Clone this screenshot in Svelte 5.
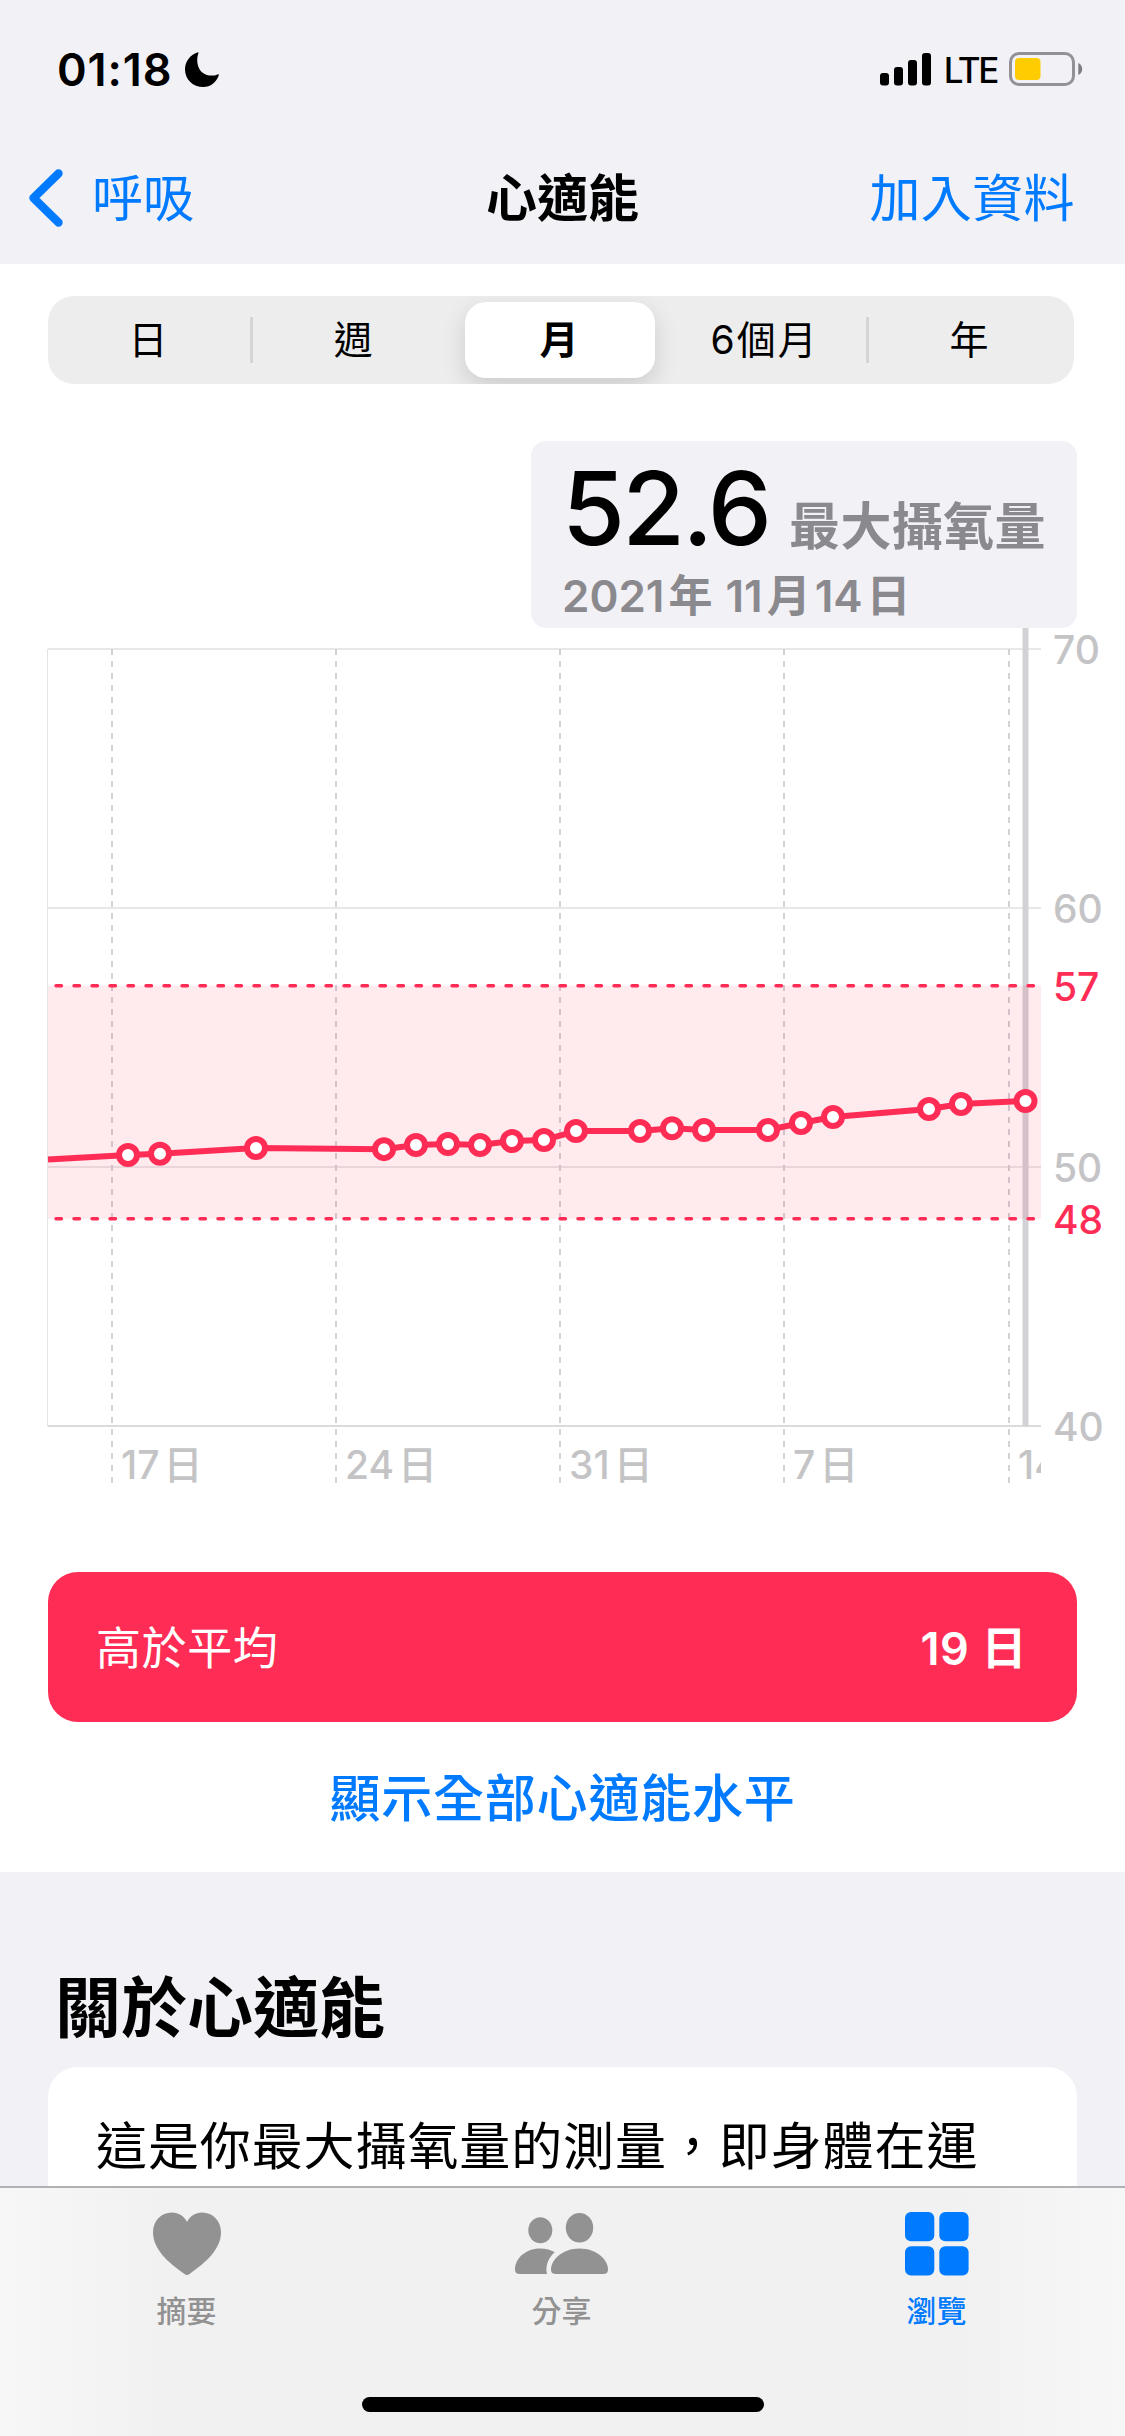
<script>
    const ranges = ['日', '週', '月', '6個月', '年'];
    const selected = 2;

    // chart scale, svg starts right under the callout
    const left = 48;
    const right = 1041;
    const top = 21;
    const unit = 25.9;
    const y = (value) => top + (70 - value) * unit;

    const gridValues = [70, 60, 50];
    const limits = [57, 48];
    const weeks = [
        { x: 112, day: 17 },
        { x: 336, day: 24 },
        { x: 560, day: 31 },
        { x: 784, day: 7 },
        { x: 1009, day: 14 }
    ];
    const readings = [
        { x: 128, value: 50.46 },
        { x: 160, value: 50.51 },
        { x: 256, value: 50.73 },
        { x: 384, value: 50.69 },
        { x: 416, value: 50.85 },
        { x: 448, value: 50.89 },
        { x: 480, value: 50.85 },
        { x: 512, value: 51.0 },
        { x: 544, value: 51.04 },
        { x: 576, value: 51.39 },
        { x: 640, value: 51.39 },
        { x: 672, value: 51.5 },
        { x: 704, value: 51.43 },
        { x: 768, value: 51.43 },
        { x: 801, value: 51.7 },
        { x: 833, value: 51.93 },
        { x: 929, value: 52.24 },
        { x: 961, value: 52.43 },
        { x: 1025.5, value: 52.55 }
    ];
    const line = [{ x: left, value: 50.29 }, ...readings]
        .map((r) => `${r.x},${y(r.value)}`)
        .join(' ');
</script>

<div class="screen">
    <header>
        <div class="status">
            <span class="time">01:18</span>
            <svg class="moon" width="34" height="35" viewBox="0 0 34 35">
                <path d="M12.6 .4 C13.2 .1 13.7 .6 13.4 1.3 C10.2 10.5 13.5 23.5 26.5 23.6 C28.8 23.6 30.7 23.2 32.5 22.4 C33.4 22.1 34 22.5 33.8 23.2 C31.5 30.3 25.5 35 18.3 35 C8 35 0 27.3 0 17.4 C0 9.5 5 2.8 12.6 .4 Z" />
            </svg>
            <svg class="signal" width="52" height="34" viewBox="0 0 52 34">
                <rect x="0" y="21" width="9" height="12.5" rx="3" />
                <rect x="14" y="15" width="9" height="18.5" rx="3" />
                <rect x="28" y="8" width="9" height="25.5" rx="3" />
                <rect x="42" y="1" width="9" height="32.5" rx="3" />
            </svg>
            <span class="network">LTE</span>
            <svg class="battery" width="75" height="34" viewBox="0 0 75 34">
                <rect x="1.5" y="1.5" width="63" height="31" rx="8.5" fill="none" stroke="#929196" stroke-width="3" />
                <rect x="6" y="6" width="25.5" height="22" rx="4" fill="#ffcc02" />
                <path d="M69.3 11 C74.5 13 74.5 21 69.3 23 Z" fill="#7d7c81" />
            </svg>
        </div>
        <nav>
            <a class="back" href="#back">
                <svg width="34" height="58" viewBox="0 0 34 58">
                    <path d="M29.5 4.5 L4.5 29 L29.5 53.5" fill="none" stroke="#007aff" stroke-width="8.4" stroke-linecap="round" stroke-linejoin="round" />
                </svg>
                <span>呼吸</span>
            </a>
            <h1>心適能</h1>
            <a class="add" href="#add">加入資料</a>
        </nav>
    </header>

    <main>
        <div class="segments">
            {#each ranges as range, i}
                <div class="segment" class:selected={i === selected} class:divided={i === 0 || i === 3}>
                    <span>{range}</span>
                </div>
            {/each}
        </div>

        <div class="callout">
            <div class="reading"><span class="value">52.6</span><span class="unit">最大攝氧量</span></div>
            <div class="date">2021<span class="year">年</span>11<span>月</span>14<span>日</span></div>
        </div>

        <svg class="chart" width="1125" height="870" viewBox="0 0 1125 870">
            <clipPath id="plot">
                <rect x={left - 1} y="0" width={right - left + 1} height="870" />
            </clipPath>
            <g clip-path="url(#plot)">
                <line x1="47.5" x2="47.5" y1={top} y2={y(40)} stroke="#e3e3e5" stroke-width="1" />
                {#each gridValues as value}
                    <line x1={left} x2={right} y1={y(value)} y2={y(value)} stroke="#e8e8e9" stroke-width="2" />
                {/each}
                <line x1={left} x2={right} y1={y(40)} y2={y(40)} stroke="#dadadb" stroke-width="2" />
                {#each weeks as week}
                    <line x1={week.x} x2={week.x} y1={top} y2="855" stroke="#d1d1d6" stroke-width="2" stroke-dasharray="6 6" />
                    <text class="tick" x={week.x + 9} y="851">{week.day}<tspan dx="4">日</tspan></text>
                {/each}
                <line x1="1025.5" x2="1025.5" y1="0" y2={y(40)} stroke="#d1d1d6" stroke-width="6" />
                <rect x={left} y={y(57)} width={right - left} height={y(48) - y(57)} fill="#ff2d55" fill-opacity="0.1" />
                {#each limits as limit}
                    <line x1="56" x2={right - 4} y1={y(limit)} y2={y(limit)} stroke="#ff2d55" stroke-width="3.4" stroke-linecap="round" stroke-dasharray="5.5 12.5" />
                {/each}
                <polyline points={line} fill="none" stroke="#ff2d55" stroke-width="6" />
                {#each readings as r}
                    <circle cx={r.x} cy={y(r.value)} r="9" fill="#fff" stroke="#ff2d55" stroke-width="6" />
                {/each}
            </g>
            {#each [...gridValues, 40] as value}
                <text class="tick" x="1053" y={y(value) + 15}>{value}</text>
            {/each}
            {#each limits as limit}
                <text class="tick limit" x="1053" y={y(limit) + 15}>{limit}</text>
            {/each}
        </svg>

        <div class="summary">
            <span>高於平均</span>
            <strong>19 日</strong>
        </div>
        <a class="show-all" href="#levels">顯示全部心適能水平</a>
    </main>

    <section>
        <h2>關於心適能</h2>
        <div class="card">這是你最大攝氧量的測量，即身體在運</div>
    </section>

    <footer>
        <div class="tabs">
            <div class="tab">
                <svg width="68" height="64" viewBox="0 0 68 64" fill="#929292">
                    <path d="M34 10 C31 4 25.5 .5 19 .5 C8 .5 0 9 0 20.5 C0 37 15 50.5 31.5 62 C33.3 63.3 34.7 63.3 36.5 62 C53 50.5 68 37 68 20.5 C68 9 60 .5 49 .5 C42.5 .5 37 4 34 10 Z" />
                </svg>
                <span>摘要</span>
            </div>
            <div class="tab">
                <svg width="94" height="64" viewBox="0 0 94 64" fill="#929292">
                    <ellipse cx="25.3" cy="18.3" rx="12" ry="13" />
                    <ellipse cx="64.5" cy="15.7" rx="13.7" ry="14.8" />
                    <path d="M0 57.5 C0 47 10 36.5 25.2 36.5 C31 36.5 36 38 39.8 40.3 C33.5 45.5 30 54 32 62 L5 62 C1.5 62 0 60.5 0 57.5 Z" />
                    <path d="M36 57.5 C36 48 47 36.5 64.5 36.5 C82 36.5 93 48 93 57.5 C93 60.5 91.5 62 88 62 L41 62 C37.5 62 36 60.5 36 57.5 Z" />
                </svg>
                <span>分享</span>
            </div>
            <div class="tab active">
                <svg width="64" height="64" viewBox="0 0 64 64" fill="#007aff">
                    <rect x="0" y="0" width="29.3" height="29.3" rx="6" />
                    <rect x="34.3" y="0" width="29.3" height="29.3" rx="6" />
                    <rect x="0" y="34.2" width="29.3" height="29.3" rx="6" />
                    <rect x="34.3" y="34.2" width="29.3" height="29.3" rx="6" />
                </svg>
                <span>瀏覽</span>
            </div>
        </div>
        <div class="home"></div>
    </footer>
</div>

<style>
    :global(body) {
        margin: 0;
    }
    .screen {
        display: flex;
        flex-direction: column;
        width: 1125px;
        height: 2436px;
        overflow: hidden;
        background: #f2f1f6;
        color: #000;
        font-family: Inter, 'Noto Sans CJK TC', sans-serif;
    }
    a {
        color: #007aff;
        text-decoration: none;
    }
    svg {
        display: block;
        flex: none;
    }
    header {
        height: 264px;
        flex: none;
    }
    .status {
        display: flex;
        align-items: center;
        height: 138px;
        padding: 0 41px 0 57px;
    }
    .time {
        width: 128px;
        font-size: 45px;
        font-weight: 600;
        letter-spacing: 0.9px;
    }
    .signal {
        margin-left: auto;
    }
    .network {
        margin: 2px 12px 0 12px;
        font-size: 35px;
        font-weight: 500;
        letter-spacing: -2.4px;
    }
    nav {
        display: grid;
        grid-template-columns: 1fr auto 1fr;
        align-items: center;
        height: 120px;
        padding: 0 50px 0 29px;
        font-size: 51px;
        line-height: 60px;
    }
    nav span,
    .add {
        padding-top: 2px;
    }
    .back {
        display: flex;
        align-items: center;
        gap: 29px;
    }
    h1 {
        margin: 0;
        padding: 2px 0 0 21px;
        font-size: 51px;
        font-weight: 700;
    }
    .add {
        justify-self: end;
        letter-spacing: 0.4px;
    }
    main {
        flex: none;
        display: flex;
        flex-direction: column;
        height: 1608px;
        background: #fff;
    }
    .segments {
        display: grid;
        grid-template: 88px / repeat(5, 1fr);
        height: 88px;
        margin: 32px 51px 0 48px;
        border-radius: 26px;
        background: #ededee;
        overflow: hidden;
    }
    .segment {
        display: flex;
        align-items: center;
        justify-content: center;
        margin: 21px 0;
        font-size: 39px;
        line-height: 46px;
        letter-spacing: 2px;
        border-right: 3px solid transparent;
    }
    .divided {
        border-color: #d5d5d6;
    }
    .selected {
        margin: 6px 9px 6px 7px;
        border: 0;
        border-radius: 21px;
        background: #fff;
        box-shadow: 0 9px 24px rgba(0, 0, 0, 0.14);
        font-weight: 600;
    }
    .callout {
        align-self: flex-end;
        box-sizing: border-box;
        width: 546px;
        height: 187px;
        margin: 57px 48px 0 0;
        padding: 15px 0 0 31px;
        border-radius: 15px;
        background: #f2f1f6;
        color: #8a898e;
        white-space: nowrap;
    }
    .reading {
        display: flex;
        align-items: baseline;
        height: 112px;
        line-height: 104px;
    }
    .value {
        width: 227px;
        color: #000;
        font-size: 102px;
        font-weight: 550;
        letter-spacing: -2.8px;
    }
    .unit {
        font-size: 51px;
        font-weight: 600;
        letter-spacing: 0.4px;
    }
    .date {
        font-size: 44px;
        font-weight: 600;
        line-height: 56px;
    }
    .date span {
        margin: 0 4px;
    }
    .date .year {
        margin-right: 13px;
    }
    .tick {
        fill: #c4c4c6;
        font-size: 39px;
        font-weight: 500;
    }
    .limit {
        fill: #ff2d55;
        font-weight: 550;
    }
    .summary {
        display: flex;
        align-items: center;
        justify-content: space-between;
        box-sizing: border-box;
        height: 150px;
        margin: 74px 48px 0;
        padding: 0 50px 4px 48px;
        border-radius: 30px;
        background: #ff2d55;
        color: #fff;
        font-size: 45px;
        letter-spacing: 0.6px;
    }
    strong {
        font-weight: 600;
    }
    .show-all {
        margin-top: 47px;
        text-align: center;
        font-size: 51px;
        font-weight: 500;
        letter-spacing: 0.8px;
        line-height: 60px;
    }
    section {
        flex: none;
        height: 314px;
        overflow: hidden;
    }
    h2 {
        margin: 96px 0 19px 55px;
        font-size: 66px;
        font-weight: 700;
        line-height: 80px;
    }
    .card {
        height: 160px;
        margin: 0 48px;
        padding: 50px 48px 0;
        border-radius: 30px;
        background: #fff;
        font-size: 51px;
        line-height: 60px;
        letter-spacing: 0.9px;
        white-space: nowrap;
    }
    footer {
        flex: 1;
        border-top: 2px solid #b1b1b5;
        background: linear-gradient(90deg, #f7f7f7, #f1f1f1 15%, #f1f1f1 85%, #f7f7f7);
    }
    .tabs {
        display: grid;
        grid-template-columns: repeat(3, 375px);
        height: 209px;
        margin-left: -1px;
    }
    .tab {
        display: flex;
        flex-direction: column;
        align-items: center;
        padding-top: 24px;
        color: #929292;
        font-size: 30px;
        font-weight: 500;
        line-height: 36px;
    }
    .tab span {
        margin-top: 17px;
    }
    .active {
        color: #007aff;
    }
    .home {
        width: 402px;
        height: 15px;
        margin: 0 auto;
        border-radius: 8px;
        background: #000;
    }
</style>
